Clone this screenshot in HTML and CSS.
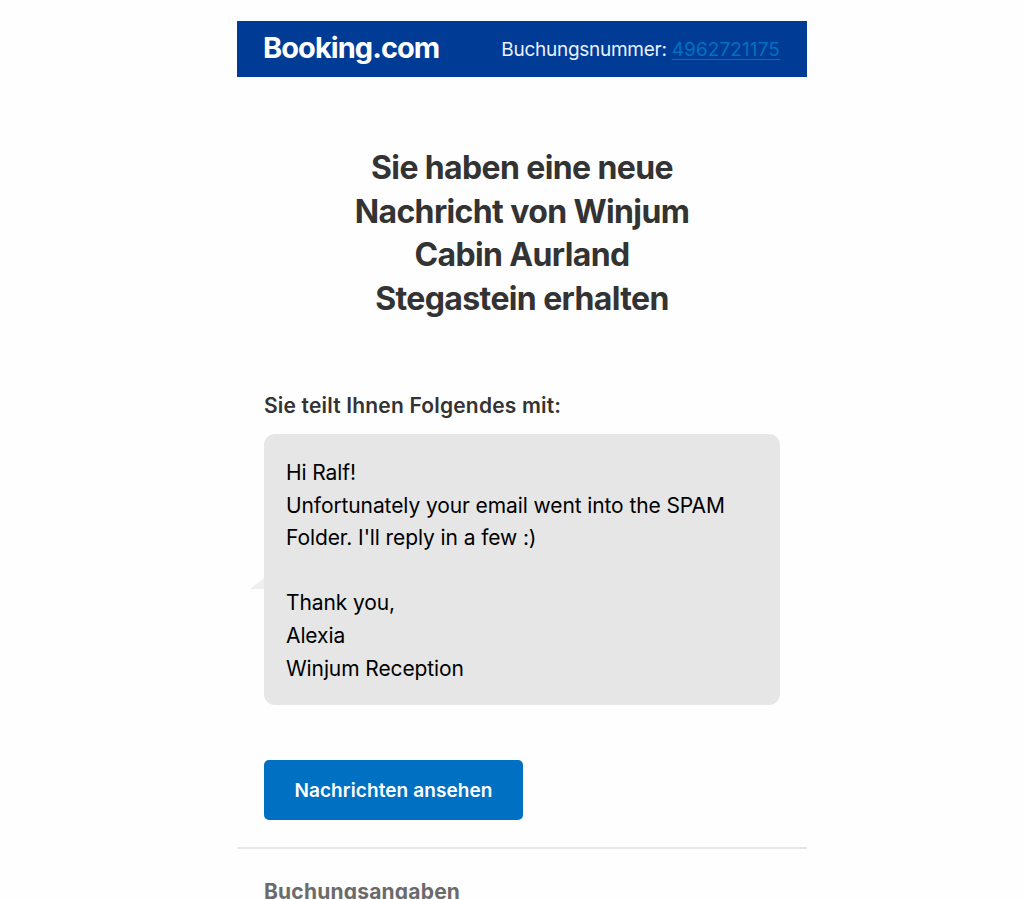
FILE: index.html
```
<!DOCTYPE html>
<html lang="de">
<head>
    <meta charset="UTF-8">
    <meta name="viewport" content="width=device-width, initial-scale=1.0">
    <title>Booking.com</title>
    <link rel="stylesheet" href="styles.css">
</head>
<body>
    <div class="container">
        <!-- Top bar -->
        <div class="header">
            <div class="logo">Booking.com</div>
            <div class="booking-number">Buchungsnummer: <a href="#">4962721175</a></div>
        </div>

        <h1>Sie haben eine neue<br>Nachricht von Winjum<br>Cabin Aurland<br>Stegastein erhalten</h1>

        <!-- Message from the property -->
        <div class="content">
            <h2>Sie teilt Ihnen Folgendes mit:</h2>
            <div class="message">
                <p>Hi Ralf!</p>
                <p>Unfortunately your email went into the SPAM</p>
                <p>Folder. I'll reply in a few :)</p>
                <p class="thanks">Thank you,</p>
                <p>Alexia</p>
                <p>Winjum Reception</p>
            </div>
            <a class="button" href="#">Nachrichten ansehen</a>
        </div>

        <div class="details">
            <h3>Buchungsangaben</h3>
        </div>
    </div>
</body>
</html>
```

FILE: styles.css
```
body {
    background-color: #fefefe;
    color: #333;
    font-family: Inter, "Liberation Sans", sans-serif;
    margin: 0;
    padding: 0;
    overflow: hidden;
}
.container {
    width: 570px;
    height: 878px;
    margin-left: 237px;
    padding-top: 21px;
}
/* Header */
.header {
    display: flex;
    justify-content: space-between;
    align-items: center;
    box-sizing: border-box;
    height: 56px;
    padding: 0 27px 0 26px;
    background-color: #003b95;
    color: #fff;
    white-space: nowrap;
}
.logo {
    font-size: 29px;
    font-weight: 700;
    letter-spacing: -0.95px;
    line-height: 36px;
    padding-bottom: 3px;
}
.booking-number {
    font-size: 19px;
    line-height: 24px;
    letter-spacing: -0.27px;
    padding-top: 2px;
    color: #e8f1ff;
}
.booking-number a {
    color: #0071c2;
    letter-spacing: 0.1px;
    text-underline-offset: 3px;
}
h1 {
    margin: 69px 0 0;
    font-size: 32px;
    font-weight: 700;
    line-height: 43.5px;
    letter-spacing: -0.62px;
    text-align: center;
    white-space: nowrap;
}
/* Message */
.content {
    padding: 72px 27px 27px;
    border-bottom: 2px solid #e6e6e6;
}
h2 {
    margin: 0 0 15px;
    font-size: 21px;
    font-weight: 600;
    line-height: 27px;
    letter-spacing: 0.18px;
}
.message {
    position: relative;
    box-sizing: border-box;
    height: 271px;
    padding: 23px 22px;
    border-radius: 11px;
    background-color: #e6e6e6;
    color: #000;
    font-size: 21px;
    line-height: 32.6px;
    letter-spacing: -0.1px;
    white-space: nowrap;
}
.message::before {
    content: "";
    position: absolute;
    left: -14px;
    top: 144px;
    border-left: 14px solid transparent;
    border-bottom: 11px solid #efefef;
}
.message p {
    margin: 0;
}
.message .thanks {
    margin-top: 32.6px;
}
.button {
    display: flex;
    justify-content: center;
    align-items: center;
    width: 259px;
    height: 60px;
    margin-top: 55px;
    border-radius: 5px;
    background-color: #0071c2;
    color: #fff;
    font-size: 19px;
    font-weight: 600;
    letter-spacing: 0.1px;
    text-decoration: none;
}
/* Booking details */
.details {
    padding: 29px 27px 0;
}
h3 {
    margin: 0;
    color: #6b6b6b;
    font-size: 21px;
    font-weight: 700;
    line-height: 27px;
    letter-spacing: 0.2px;
}
```
